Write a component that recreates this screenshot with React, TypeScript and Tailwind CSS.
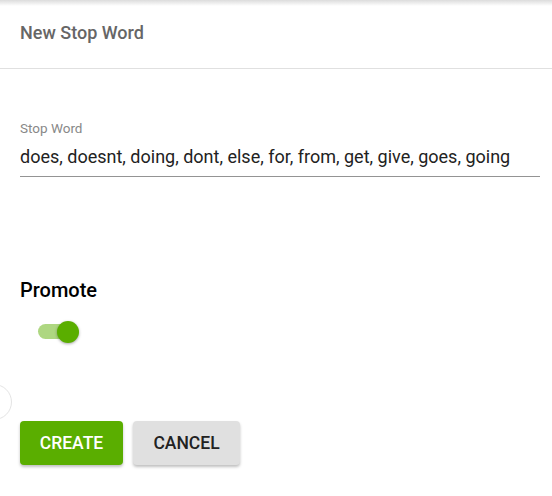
export default function App() {
  return (
    <div className="relative h-[496px] w-[552px] overflow-hidden bg-white font-['Roboto',sans-serif]">
      <div className="h-[6px] bg-gradient-to-b from-[#dcdcdc] to-white" />
      <div className="border-b border-[#e0e0e0] px-5 pb-[23px] pt-[15px]">
        <h2 className="text-[18px] font-medium leading-[24px] text-[#666]">New Stop Word</h2>
      </div>
      <div className="pl-5 pr-3 pt-[51px]">
        <label className="block text-[13.5px] leading-[16px] text-[#888]">Stop Word</label>
        <div className="mt-[9px] border-b border-[#949494] pb-[7px] text-[18px] leading-[24px] text-[#222]">
          does, doesnt, doing, dont, else, for, from, get, give, goes, going
        </div>
        <div className="mt-[101px] text-[20px] font-medium leading-[24px] text-black">Promote</div>
        <div className="relative mt-[19px] ml-[18px] h-[21px] w-[42px]">
          <div className="absolute left-0 top-[3px] h-[15px] w-[36px] rounded-full bg-[#aed781]" />
          <div className="absolute left-[19px] top-0 h-[22px] w-[22px] rounded-full bg-[#5aae00] shadow-[0_1px_3px_rgba(0,0,0,0.35)]" />
        </div>
        <div className="mt-[79px] flex gap-[10px]">
          <button className="h-[44px] w-[103px] rounded-[4px] bg-[#5aae00] text-[17.5px] font-medium text-white shadow-[0_2px_3px_rgba(0,0,0,0.25)]">
            CREATE
          </button>
          <button className="h-[44px] w-[107px] rounded-[4px] bg-[#e0e0e0] text-[17.5px] font-medium text-[#222] shadow-[0_2px_3px_rgba(0,0,0,0.25)]">
            CANCEL
          </button>
        </div>
      </div>
      <div className="absolute left-[-24px] top-[384px] h-[36px] w-[36px] rounded-full border border-[#e4e4e4] bg-white" />
    </div>
  );
}
